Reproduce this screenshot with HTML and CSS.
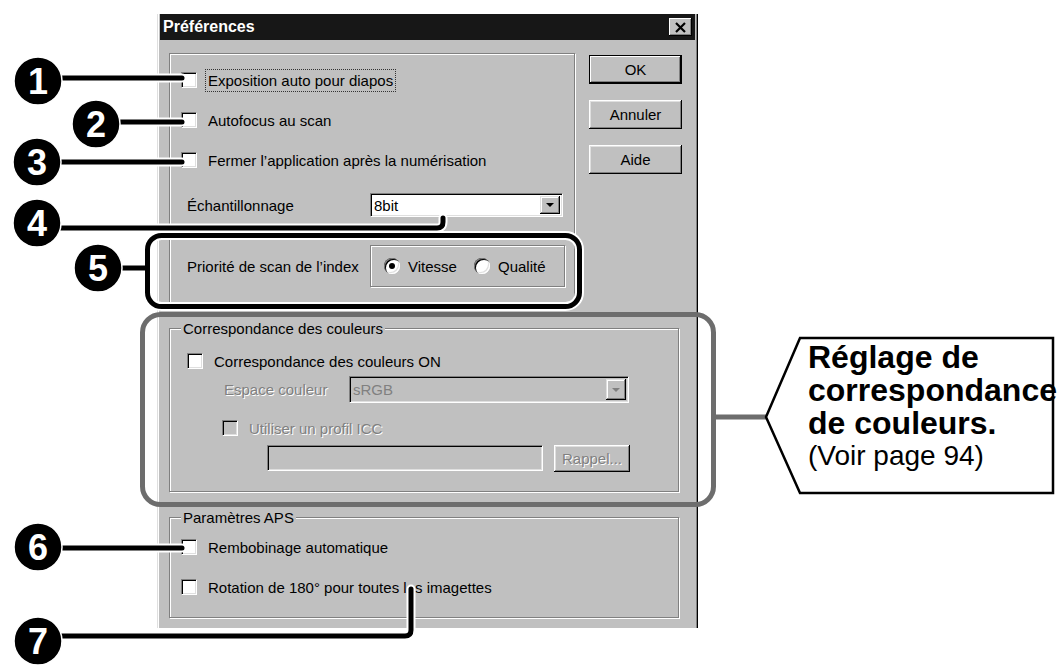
FILE: index.html
```html
<!DOCTYPE html>
<html lang="fr">
<head>
    <meta charset="UTF-8">
    <title>Préférences</title>
    <link rel="stylesheet" href="styles.css">
</head>
<body>
<div class="page">
    <div class="dialog">
        <div class="titlebar">
            <span class="title">Préférences</span>
            <span class="close-btn">
                <svg width="13" height="11" viewBox="0 0 13 11"><path d="M2 1 L11 10 M11 1 L2 10" stroke="#000" stroke-width="2.2"/></svg>
            </span>
        </div>

        <div class="content">
            <div class="top-row">
                <div class="panel main-panel">
                    <div class="check-row">
                        <span class="checkbox"></span>
                        <span class="check-label focus">Exposition auto pour diapos</span>
                    </div>
                    <div class="check-row">
                        <span class="checkbox"></span>
                        <span class="check-label">Autofocus au scan</span>
                    </div>
                    <div class="check-row">
                        <span class="checkbox"></span>
                        <span class="check-label">Fermer l’application après la numérisation</span>
                    </div>
                    <div class="select-row">
                        <span class="field-label">Échantillonnage</span>
                        <div class="select">
                            <span class="select-value">8bit</span>
                            <span class="select-arrow"><i></i></span>
                        </div>
                    </div>
                    <div class="radio-row">
                        <span class="field-label">Priorité de scan de l’index</span>
                        <div class="radio-box">
                            <span class="radio checked"></span>
                            <span class="radio-label">Vitesse</span>
                            <span class="radio"></span>
                            <span class="radio-label">Qualité</span>
                        </div>
                    </div>
                </div>

                <div class="buttons">
                    <button class="btn default">OK</button>
                    <button class="btn">Annuler</button>
                    <button class="btn">Aide</button>
                </div>
            </div>

            <div class="group colour-group">
                <span class="group-label">Correspondance des couleurs</span>
                <div class="check-row colour-on">
                    <span class="checkbox"></span>
                    <span class="check-label">Correspondance des couleurs ON</span>
                </div>
                <div class="space-row">
                    <span class="space-label disabled">Espace couleur</span>
                    <div class="select is-disabled">
                        <span class="select-value disabled-dim">sRGB</span>
                        <span class="select-arrow"><i></i></span>
                    </div>
                </div>
                <div class="check-row icc-row">
                    <span class="checkbox is-disabled"></span>
                    <span class="check-label disabled">Utiliser un profil ICC</span>
                </div>
                <div class="profile-row">
                    <span class="text-field"></span>
                    <button class="btn small disabled">Rappel...</button>
                </div>
            </div>

            <div class="group aps-group">
                <span class="group-label">Paramètres APS</span>
                <div class="check-row aps-row">
                    <span class="checkbox"></span>
                    <span class="check-label">Rembobinage automatique</span>
                </div>
                <div class="check-row aps-row">
                    <span class="checkbox"></span>
                    <span class="check-label">Rotation de 180° pour toutes les imagettes</span>
                </div>
            </div>
        </div>
    </div>

    <!-- callouts drawn over the dialog -->
    <svg class="annotations" width="1062" height="668" viewBox="0 0 1062 668">
        <g fill="none" stroke="#fff" stroke-width="9" stroke-linecap="round" stroke-linejoin="round">
            <path d="M38 78 H182"/>
            <path d="M96 122 H182"/>
            <path d="M37 162 H182"/>
            <path d="M37 228 H437 Q443 228 443 222 V218"/>
            <path d="M98 268 H147"/>
            <rect x="147.5" y="235.5" width="432" height="71" rx="14"/>
            <path d="M38 548 H182"/>
            <path d="M38 636 H405 Q411 636 411 630 V589"/>
        </g>
        <g fill="none" stroke="#000" stroke-width="5" stroke-linecap="round" stroke-linejoin="round">
            <path d="M38 78 H182"/>
            <path d="M96 122 H182"/>
            <path d="M37 162 H182"/>
            <path d="M37 228 H437 Q443 228 443 222 V218"/>
            <path d="M98 268 H147"/>
            <rect x="147.5" y="235.5" width="432" height="71" rx="14"/>
            <path d="M38 548 H182"/>
            <path d="M38 636 H405 Q411 636 411 630 V589"/>
        </g>
        <g fill="none" stroke="#6d6d6d" stroke-width="5">
            <rect x="142.5" y="314.5" width="571" height="190" rx="18"/>
            <path d="M714 417 H766"/>
        </g>
        <polygon points="800,338 1053,338 1053,493 800,493 766,417" fill="#fff" stroke="#000" stroke-width="2.5"/>

        <g class="marker" fill="#000" stroke="#fff" stroke-width="1.5">
            <circle cx="38" cy="81" r="24"/>
            <circle cx="96" cy="124" r="24"/>
            <circle cx="37" cy="162" r="24"/>
            <circle cx="37" cy="223" r="24"/>
            <circle cx="98" cy="268" r="24"/>
            <circle cx="38" cy="547" r="24"/>
            <circle cx="38" cy="641" r="24"/>
        </g>
        <g class="marker-num" fill="#fff" text-anchor="middle">
            <text x="38" y="94">1</text>
            <text x="96" y="137">2</text>
            <text x="37" y="175">3</text>
            <text x="37" y="236">4</text>
            <text x="98" y="281">5</text>
            <text x="38" y="560">6</text>
            <text x="38" y="654">7</text>
        </g>
    </svg>

    <div class="callout-text">
        <div class="callout-title">Réglage de<br>correspondance<br>de couleurs.</div>
        <div class="callout-ref">(Voir page 94)</div>
    </div>
</div>
</body>
</html>
```

FILE: styles.css
```css
body {
    margin: 0;
    background: #fff;
    font-family: "Liberation Sans", Arial, sans-serif;
    font-size: 15px;
    color: #000;
}

.page {
    position: relative;
    width: 1062px;
    height: 668px;
    overflow: hidden;
}

/* window */
.dialog {
    margin: 14px 0 0 157px;
    width: 541px;
    height: 614px;
    box-sizing: border-box;
    background: #c0c0c0;
    border-left: 1px solid #dfdfdf;
    border-right: 1px solid #000;
    box-shadow: inset 1px 0 0 #fff, inset -1px 0 0 #808080;
    padding: 0 2px 0 2px;
}

.titlebar {
    height: 26px;
    background: #171717;
    display: flex;
    align-items: center;
    justify-content: space-between;
    padding: 0 3px 0 3px;
}

.title {
    color: #fff;
    font-weight: bold;
    font-size: 16px;
}

.close-btn {
    width: 23px;
    height: 18px;
    box-sizing: border-box;
    background: #c0c0c0;
    display: flex;
    align-items: center;
    justify-content: center;
    box-shadow: inset -1px -1px 0 #000, inset 1px 1px 0 #fff, inset -2px -2px 0 #808080;
}

.content {
    padding: 13px 0 0 9px;
}

.top-row {
    display: flex;
}

/* etched frames */
.panel,
.group,
.radio-box {
    box-sizing: border-box;
    border: 1px solid #808080;
    box-shadow: inset 1px 1px 0 #fff, 1px 1px 0 #fff;
}

.main-panel {
    width: 406px;
    height: 251px;
    padding: 6px 0 0 11px;
}

.check-row {
    display: flex;
    align-items: center;
    height: 40px;
}

.checkbox {
    flex: none;
    width: 16px;
    height: 16px;
    box-sizing: border-box;
    background: #fff;
    border-top: 1px solid #808080;
    border-left: 1px solid #808080;
    border-right: 1px solid #fff;
    border-bottom: 1px solid #fff;
    box-shadow: inset 1px 1px 0 #000, inset -1px -1px 0 #dfdfdf;
}

.checkbox.is-disabled {
    background: #c0c0c0;
}

.check-label {
    margin-left: 11px;
    white-space: nowrap;
}

.focus {
    outline: 1px dotted #333;
    outline-offset: 2px;
}

.select-row {
    display: flex;
    align-items: center;
    height: 50px;
}

.field-label {
    width: 183px;
    margin-left: 6px;
    flex: none;
}

.select {
    width: 193px;
    height: 24px;
    box-sizing: border-box;
    background: #fff;
    border-top: 1px solid #808080;
    border-left: 1px solid #808080;
    border-right: 1px solid #fff;
    border-bottom: 1px solid #fff;
    box-shadow: inset 1px 1px 0 #000, inset -1px -1px 0 #dfdfdf;
    display: flex;
    align-items: center;
    justify-content: space-between;
    padding: 2px 2px 2px 3px;
}

.select.is-disabled {
    width: 280px;
    height: 27px;
    background: #c0c0c0;
}

.select-arrow {
    width: 20px;
    height: 100%;
    box-sizing: border-box;
    background: #c0c0c0;
    display: flex;
    align-items: center;
    justify-content: center;
    box-shadow: inset -1px -1px 0 #000, inset 1px 1px 0 #dfdfdf, inset -2px -2px 0 #808080, inset 2px 2px 0 #fff;
}

.select-arrow i {
    width: 0;
    height: 0;
    border-left: 4px solid transparent;
    border-right: 4px solid transparent;
    border-top: 4px solid #000;
}

.is-disabled .select-arrow i {
    border-top-color: #808080;
}

.radio-row {
    display: flex;
    align-items: center;
    margin-top: 15px;
    height: 42px;
}

.radio-box {
    width: 195px;
    height: 42px;
    display: flex;
    align-items: center;
    padding-left: 13px;
}

.radio {
    flex: none;
    width: 16px;
    height: 16px;
    border-radius: 50%;
    background: #fff;
    position: relative;
    box-shadow: inset 1px 1px 0 #808080, inset 2px 2px 0 #000, inset -1px -1px 0 #fff, inset -2px -2px 0 #dfdfdf;
}

.radio.checked::after {
    content: '';
    position: absolute;
    left: 5px;
    top: 5px;
    width: 6px;
    height: 6px;
    border-radius: 50%;
    background: #000;
}

.radio-label {
    margin-left: 8px;
    width: 73px;
}

.buttons {
    display: flex;
    flex-direction: column;
    gap: 16px;
    margin-left: 14px;
    padding-top: 2px;
}

.btn {
    width: 93px;
    height: 29px;
    padding: 0;
    border: none;
    background: #c0c0c0;
    font-family: "Liberation Sans", Arial, sans-serif;
    font-size: 15px;
    color: #000;
    box-shadow: inset -1px -1px 0 #000, inset 1px 1px 0 #fff, inset -2px -2px 0 #808080, inset 2px 2px 0 #dfdfdf;
}

.btn.default {
    box-shadow: inset 0 0 0 1px #000, inset -2px -2px 0 #000, inset 2px 2px 0 #fff, inset -3px -3px 0 #808080;
}

.btn.small {
    width: 76px;
    height: 27px;
    margin-left: 11px;
}

.btn.disabled,
.disabled {
    color: #808080;
    text-shadow: 1px 1px 0 #fff;
}

.disabled-dim {
    color: #808080;
}

/* group boxes */
.group {
    position: relative;
    width: 510px;
}

.group-label {
    position: absolute;
    top: -9px;
    left: 11px;
    padding: 0 2px;
    line-height: 17px;
    background: #c0c0c0;
}

.colour-group {
    margin-top: 24px;
    height: 164px;
}

.colour-on {
    height: 20px;
    margin: 22px 0 0 17px;
}

.space-row {
    display: flex;
    align-items: center;
    height: 27px;
    margin: 5px 0 0 54px;
}

.space-label {
    width: 125px;
}

.icc-row {
    height: 20px;
    margin: 15px 0 0 52px;
}

.profile-row {
    display: flex;
    align-items: flex-start;
    height: 28px;
    margin: 7px 0 0 97px;
}

.text-field {
    width: 276px;
    height: 26px;
    box-sizing: border-box;
    border-top: 1px solid #808080;
    border-left: 1px solid #808080;
    border-right: 1px solid #fff;
    border-bottom: 1px solid #fff;
    box-shadow: inset 1px 1px 0 #000, inset -1px -1px 0 #dfdfdf;
}

.aps-group {
    margin-top: 25px;
    height: 101px;
    padding-top: 19px;
}

.aps-row {
    height: 20px;
    margin-left: 11px;
}

.aps-row + .aps-row {
    margin-top: 20px;
}

/* annotations over the screenshot */
.annotations {
    position: absolute;
    left: 0;
    top: 0;
}

.marker-num {
    font-family: "Liberation Sans", Arial, sans-serif;
    font-weight: bold;
    font-size: 36px;
}

.callout-text {
    position: absolute;
    left: 808px;
    top: 341px;
    white-space: nowrap;
}

.callout-title {
    font-size: 32px;
    font-weight: bold;
    line-height: 33px;
}

.callout-ref {
    font-size: 28px;
    line-height: 32px;
}
```
